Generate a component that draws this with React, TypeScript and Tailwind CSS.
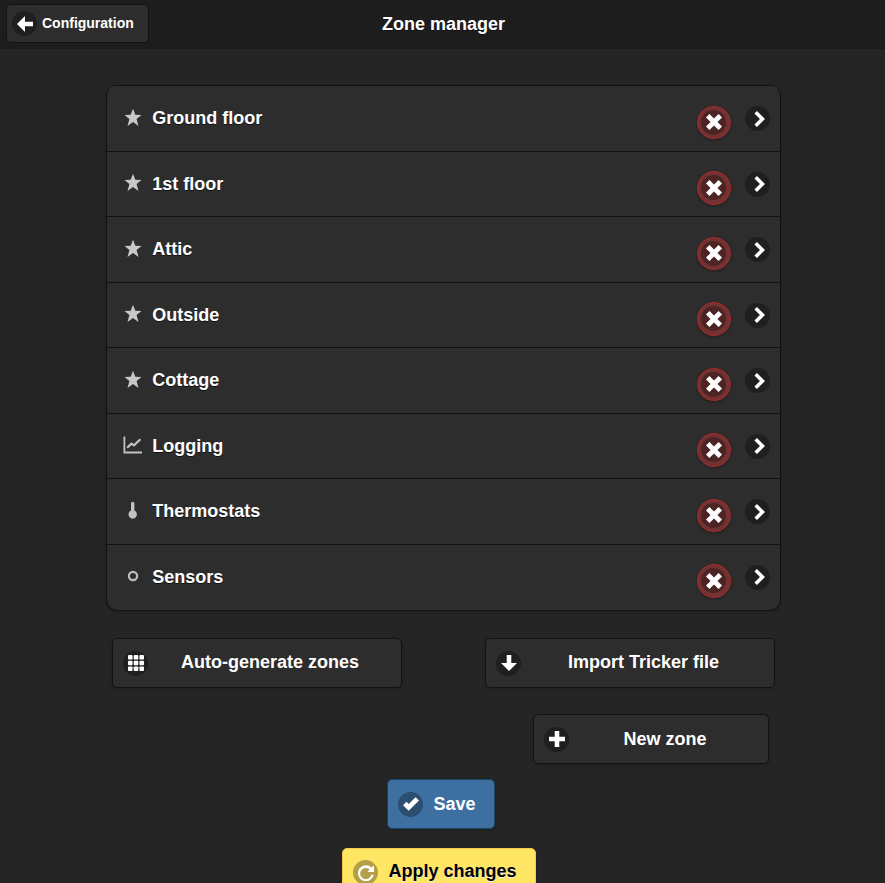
import React from 'react';
import clsx from 'clsx';

const glyphs = {
  back: <polygon points="7,5 7,0 0,7 7,14 7,9 14,9 14,5" />,
  down: <polygon points="9,7 9,0 5,0 5,7 0,7 7,14 14,7" />,
  plus: <polygon points="14,5 9,5 9,0 5,0 5,5 0,5 0,9 5,9 5,14 9,14 9,9 14,9" />,
  remove: <polygon points="14,3 11,0 7,4 3,0 0,3 4,7 0,11 3,14 7,10 11,14 14,11 10,7" />,
  next: <polygon points="3.9,11.8 6.1,14 13.1,7 6.1,0 3.9,2.2 8.7,7" />,
  check: <polygon points="14,4 11,1 5,7 3,5 0,8 5,13" />,
  grid: (
    <>
      {[0, 5, 10].map((y) =>
        [0, 5, 10].map((x) => <rect key={`${x}-${y}`} x={x} y={y} width="4" height="4" rx="0.8" />)
      )}
    </>
  ),
  refresh: (
    <path d="M14 0.5v5.7H8.2l2.1-2.1A4.9 4.9 0 1 0 11.6 8.6h2.2A7 7 0 1 1 11.9 2.2z" />
  ),
};

type GlyphName = keyof typeof glyphs;

const Disc = ({ name, className }: { name: GlyphName; className?: string }) => (
  <span className={clsx('flex h-[25px] w-[25px] shrink-0 items-center justify-center rounded-full', className || 'bg-[#1f1f1f]')}>
    <svg viewBox="0 0 14 14" className="h-4 w-4 fill-white">
      {glyphs[name]}
    </svg>
  </span>
);

const zoneIcons = {
  star: <path fill="#c8c8c8" d="M10 0.8l2.3 5.9 6.2.3-4.9 4 1.9 6.9L10 14.1l-5.5 3.8 1.9-6.9-4.9-4 6.2-.3z" />,
  chart: (
    <g fill="none" stroke="#c2c2c2">
      <path strokeWidth="1.8" d="M1.4 1.6v15.9H19" />
      <path strokeWidth="2.2" d="M4.2 12.8L8.4 8.6l2.6 1.8L17.4 4.2" />
    </g>
  ),
  thermometer: <path fill="#c2c2c2" d="M8 2.4a1.6 1.6 0 0 1 3.4 0v7.2a4.2 4.2 0 1 1-3.4 0z" />,
  circle: <circle cx="10" cy="10" r="4.1" fill="none" stroke="#bebebe" strokeWidth="2.2" />,
};

const zones: { label: string; icon: keyof typeof zoneIcons }[] = [
  { label: 'Ground floor', icon: 'star' },
  { label: '1st floor', icon: 'star' },
  { label: 'Attic', icon: 'star' },
  { label: 'Outside', icon: 'star' },
  { label: 'Cottage', icon: 'star' },
  { label: 'Logging', icon: 'chart' },
  { label: 'Thermostats', icon: 'thermometer' },
  { label: 'Sensors', icon: 'circle' },
];

const ZoneRow = ({ label, icon }: { label: string; icon: keyof typeof zoneIcons }) => (
  <li className="flex h-[65.5px] items-start border-t border-[#121212] pl-4 pr-[10px]">
    <svg viewBox="0 0 20 20" className="mt-[21.5px] h-5 w-5">
      {zoneIcons[icon]}
    </svg>
    <span className="ml-[9.3px] mt-[18px] flex-1 leading-7">{label}</span>
    <button className="mt-[19.5px] flex h-[33.5px] w-[33.5px] items-center justify-center rounded-full border border-[#a92a2a] bg-[#733232] shadow-[0_1px_3px_rgba(0,0,0,0.3)]">
      <Disc name="remove" className="bg-[#4c2424]" />
    </button>
    <span className="ml-[14.5px] mt-5">
      <Disc name="next" />
    </span>
  </li>
);

const buttonBase = 'flex h-[50px] items-center rounded-[5px] border px-[10px] shadow-[0_1px_3px_rgba(0,0,0,0.2)]';
const darkButton = 'border-[#121212] bg-[#2d2d2d]';

export default function App() {
  return (
    <div className="h-[883px] overflow-hidden bg-[#252525] font-['Liberation_Sans',sans-serif] text-[18px] font-bold text-white [text-shadow:0_1px_0_#111]">
      <header className="grid h-[49px] grid-cols-[1fr_auto_1fr] items-start border-b border-[#1b1b1b] bg-[#1d1d1d]">
        <button className="ml-[6px] mt-1 flex h-[39px] w-[143px] items-center rounded-[5px] border border-[#121212] bg-[#2d2d2d] pl-[5px] text-[14px]">
          <Disc name="back" />
          <span className="ml-[5px] pb-px leading-5">Configuration</span>
        </button>
        <h1 className="mt-[10px] pl-[2px] leading-7">Zone manager</h1>
      </header>

      <main className="px-[106px] pt-[36px]">
        <ul className="h-[526px] w-[675px] overflow-hidden rounded-[11px] border border-t-0 border-[#121212] bg-[#2d2d2d] shadow-[0_1px_3px_rgba(0,0,0,0.2)]">
          {zones.map((zone) => (
            <ZoneRow key={zone.label} {...zone} />
          ))}
        </ul>

        <div className="mt-[27px] flex w-[675px] justify-between px-[6px]">
          <button className={clsx(buttonBase, darkButton, 'w-[290px]')}>
            <Disc name="grid" />
            <span className="flex-1 pr-3 pb-[2px] pl-[13px]">Auto-generate zones</span>
          </button>
          <button className={clsx(buttonBase, darkButton, 'w-[290px]')}>
            <Disc name="down" />
            <span className="flex-1 pb-[2px] pl-[2px]">Import Tricker file</span>
          </button>
        </div>

        <div className="mt-[26px] flex w-[663px] justify-end">
          <button className={clsx(buttonBase, darkButton, 'w-[236px]')}>
            <Disc name="plus" />
            <span className="flex-1 pl-[3px]">New zone</span>
          </button>
        </div>
      </main>

      <div className="flex w-[878px] flex-col items-center pt-[15.4px] pl-[4px]">
        <button className={clsx(buttonBase, 'w-[108px] border-[#1f4463] bg-[#3d6fa1]')}>
          <Disc name="check" className="bg-[#2b4e71]" />
          <span className="ml-[10.5px]">Save</span>
        </button>
        <button className={clsx(buttonBase, 'mt-[18.6px] mr-[4px] w-[194px] border-[#f7c942] bg-[#ffe564] text-black [text-shadow:0_1px_0_#eee]')}>
          <Disc name="refresh" className="bg-[#b3a046]" />
          <span className="ml-[10.5px] pb-[2px] whitespace-nowrap">Apply changes</span>
        </button>
      </div>
    </div>
  );
}
